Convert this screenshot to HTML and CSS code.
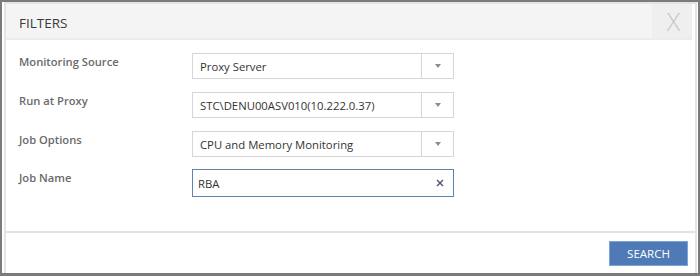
FILE: index.html
```html
<!DOCTYPE html>
<html lang="en">
<head>
  <meta charset="UTF-8">
  <title>Filters</title>
  <link rel="stylesheet" href="styles.css">
</head>
<body>

  <div class="frame">
    <div class="dialog">
      <header class="dialog-header">
        <h1>FILTERS</h1>
        <span class="close">X</span>
      </header>

      <main class="dialog-body">
        <div class="row">
          <label>Monitoring Source</label>
          <div class="select">
            <span class="value">Proxy Server</span>
            <span class="arrow"></span>
          </div>
        </div>
        <div class="row">
          <label>Run at Proxy</label>
          <div class="select">
            <span class="value">STC\DENU00ASV010(10.222.0.37)</span>
            <span class="arrow"></span>
          </div>
        </div>
        <div class="row">
          <label>Job Options</label>
          <div class="select">
            <span class="value">CPU and Memory Monitoring</span>
            <span class="arrow"></span>
          </div>
        </div>
        <div class="row row-input">
          <label>Job Name</label>
          <div class="text-input">
            <span class="value">RBA</span>
            <svg class="clear" width="8" height="8" viewBox="0 0 8 8">
              <path d="M1 1 L7 7 M7 1 L1 7" stroke="#4a5566" stroke-width="1.4" fill="none"/>
            </svg>
          </div>
        </div>
      </main>

      <footer class="dialog-footer">
        <button>SEARCH</button>
      </footer>
    </div>
  </div>

</body>
</html>
```

FILE: styles.css
```css
body {
  margin: 0;
  padding: 0;
  background-color: #fff;
  font-family: "Open Sans", "Liberation Sans", sans-serif;
}

.frame {
  width: 700px;
  height: 276px;
  box-sizing: border-box;
  border: 2px solid #7b7b7b;
  border-bottom-width: 3px;
}

.dialog {
  height: 100%;
  box-sizing: border-box;
  margin: 0 1px 0 2px;
  border: solid #e4e4e4;
  border-width: 2px 2px 0 2px;
  display: flex;
  flex-direction: column;
}

.dialog-header {
  height: 34px;
  margin-right: 3px;
  background-color: #f4f4f4;
  border-bottom: 2px solid #ececec;
  display: flex;
  align-items: center;
  justify-content: space-between;
}

.dialog-header h1 {
  margin: 0 0 0 13px;
  padding-top: 3px;
  font-size: 13.5px;
  font-weight: normal;
  color: #3a3a3a;
}

.close {
  width: 40px;
  height: 34px;
  background-color: #efefef;
  color: #c6c6c6;
  font-size: 25px;
  font-weight: 300;
  line-height: 34px;
  text-align: center;
  padding-left: 3px;
  box-sizing: border-box;
}

.dialog-body {
  flex: 1;
  padding: 13px 0 0 13px;
}

.row {
  display: flex;
  align-items: flex-start;
  height: 26px;
  margin-bottom: 13px;
}

.row-input {
  margin-top: -1px;
}

.row label {
  width: 173px;
  font-size: 11.2px;
  font-weight: 600;
  color: #6a6a6a;
  padding-top: 1px;
}

.select,
.text-input {
  width: 262px;
  height: 26px;
  box-sizing: border-box;
  border: 1px solid #d6d6d6;
  display: flex;
  align-items: center;
  font-size: 11.3px;
  color: #333;
}

.value {
  flex: 1;
  padding-left: 7px;
}

.arrow {
  width: 31px;
  height: 100%;
  border-left: 1px solid #d6d6d6;
  position: relative;
}

.arrow:after {
  content: "";
  position: absolute;
  left: 13px;
  top: 10px;
  border-left: 3px solid transparent;
  border-right: 3px solid transparent;
  border-top: 4px solid #8c8c8c;
}

.text-input {
  height: 28px;
  border-color: #5f82b1;
  padding-right: 9px;
}

.text-input .value {
  padding-left: 5px;
  padding-top: 1px;
}

.dialog-footer {
  border-top: 2px solid #e3e3e3;
  padding: 8px 7px 7px 0;
  display: flex;
  justify-content: flex-end;
}

.dialog-footer button {
  width: 79px;
  height: 25px;
  background-color: #4f7ab5;
  border: 1px solid #78a6dc;
  color: #fff;
  font-family: "Open Sans", "Liberation Sans", sans-serif;
  font-size: 11.5px;
  padding: 0;
  cursor: pointer;
}
```
